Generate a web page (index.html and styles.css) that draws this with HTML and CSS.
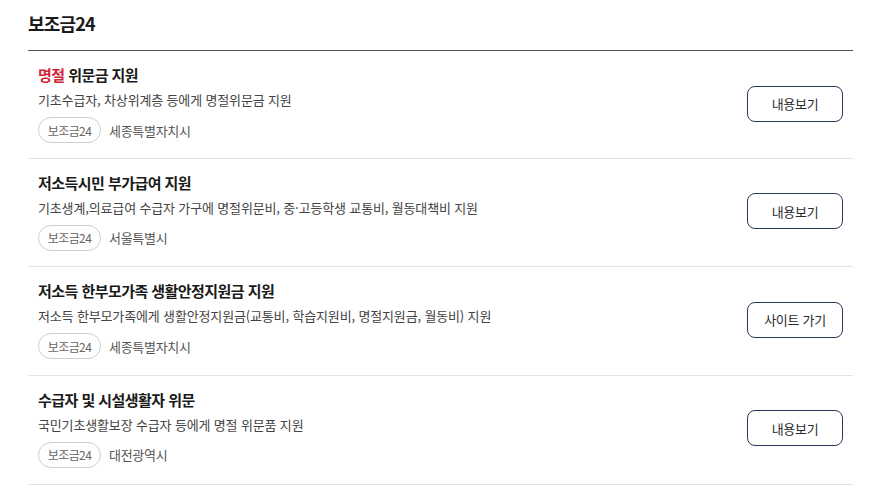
FILE: index.html
```html
<!DOCTYPE html>
<html lang="ko">
<head>
<meta charset="utf-8">
<link rel="stylesheet" href="styles.css">
</head>
<body>
<div class="wrap">
  <h2 class="heading">보조금24</h2>
  <ul class="list">
    <li class="item">
      <div class="info">
        <p class="title"><span class="hl">명절</span> 위문금 지원</p>
        <p class="desc">기초수급자, 차상위계층 등에게 명절위문금 지원</p>
        <div class="meta"><span class="tag">보조금24</span><span class="loc">세종특별자치시</span></div>
      </div>
      <a class="btn">내용보기</a>
    </li>
    <li class="item">
      <div class="info">
        <p class="title">저소득시민 부가급여 지원</p>
        <p class="desc">기초생계,의료급여 수급자 가구에 명절위문비, 중·고등학생 교통비, 월동대책비 지원</p>
        <div class="meta"><span class="tag">보조금24</span><span class="loc">서울특별시</span></div>
      </div>
      <a class="btn">내용보기</a>
    </li>
    <li class="item">
      <div class="info">
        <p class="title">저소득 한부모가족 생활안정지원금 지원</p>
        <p class="desc">저소득 한부모가족에게 생활안정지원금(교통비, 학습지원비, 명절지원금, 월동비) 지원</p>
        <div class="meta"><span class="tag">보조금24</span><span class="loc">세종특별자치시</span></div>
      </div>
      <a class="btn">사이트 가기</a>
    </li>
    <li class="item">
      <div class="info">
        <p class="title">수급자 및 시설생활자 위문</p>
        <p class="desc">국민기초생활보장 수급자 등에게 명절 위문품 지원</p>
        <div class="meta"><span class="tag">보조금24</span><span class="loc">대전광역시</span></div>
      </div>
      <a class="btn">내용보기</a>
    </li>
  </ul>
</div>
</body>
</html>
```

FILE: styles.css
```css
* { box-sizing: border-box; }
html, body { margin: 0; padding: 0; background: #fff; }
body {
  font-family: "Noto Sans CJK KR", "Noto Sans", sans-serif;
  color: #1a1a1a;
}
.wrap {
  width: 825px;
  margin-left: 28px;
}
.heading {
  margin: 0;
  padding-top: 10px;
  padding-bottom: 14px;
  font-size: 18px;
  line-height: 26px;
  font-weight: 700;
  letter-spacing: -0.8px;
  color: #1a1a1a;
  border-bottom: 1px solid #555;
}
.list {
  list-style: none;
  margin: 0;
  padding: 0;
}
.item {
  display: flex;
  align-items: center;
  justify-content: space-between;
  padding: 13px 10px 15.67px 10px;
  border-bottom: 1px solid #e4e4e4;
}
.item:first-child { padding-bottom: 14.67px; }
.info { display: flex; flex-direction: column; }
.title {
  margin: 0;
  font-size: 15px;
  line-height: 22px;
  font-weight: 700;
  letter-spacing: -0.55px;
  color: #1a1a1a;
}
.hl { color: #d2253b; }
.desc {
  margin: 4px 0 0;
  font-size: 13px;
  line-height: 20px;
  letter-spacing: -0.15px;
  color: #444;
}
.meta {
  margin-top: 7px;
  display: flex;
  align-items: center;
  gap: 8px;
}
.tag {
  display: inline-flex;
  align-items: center;
  justify-content: center;
  height: 26px;
  width: 63px;
  border: 1px solid #cfcfcf;
  border-radius: 13px;
  font-size: 12px;
  letter-spacing: -0.6px;
  color: #666;
}
.loc {
  font-size: 13px;
  letter-spacing: -0.3px;
  color: #555;
}
.btn {
  display: inline-flex;
  align-items: center;
  justify-content: center;
  width: 96px;
  height: 36px;
  border: 1px solid #2a3a58;
  border-radius: 8px;
  font-size: 13px;
  letter-spacing: -0.3px;
  color: #2b2b2b;
  flex-shrink: 0;
}
```
